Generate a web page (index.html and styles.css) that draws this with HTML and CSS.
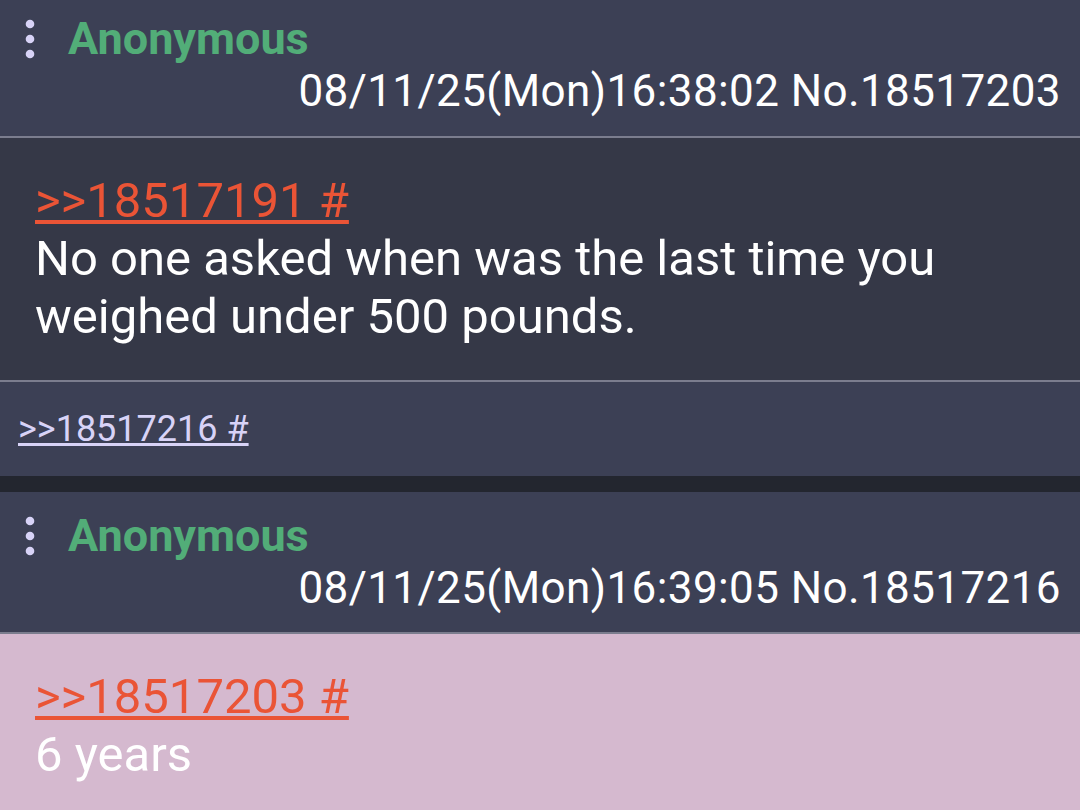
FILE: index.html
```html
<!DOCTYPE html>
<html lang="en">
  <head>
    <meta charset="UTF-8" />
    <title>Thread</title>
    <link rel="stylesheet" href="styles.css">
  </head>
  <body>
    <!-- first post is scrolled a few pixels past the top edge -->
    <div class="post scrolled">
      <div class="post-head">
        <div class="name-row">
          <svg class="menu" width="12" height="42" viewBox="0 0 12 42">
            <circle cx="6" cy="6" r="4.3" />
            <circle cx="6" cy="21" r="4.3" />
            <circle cx="6" cy="36" r="4.3" />
          </svg>
          <span class="name">Anonymous</span>
        </div>
        <div class="meta">08/11/25(Mon)16:38:02 No.18517203</div>
      </div>
      <div class="post-body">
        <a class="quote" href="#">&gt;&gt;18517191 #</a>
        <p>No one asked when was the last time you weighed under 500 pounds.</p>
      </div>
      <div class="replies">
        <a href="#">&gt;&gt;18517216 #</a>
      </div>
    </div>

    <div class="post">
      <div class="post-head">
        <div class="name-row">
          <svg class="menu" width="12" height="42" viewBox="0 0 12 42">
            <circle cx="6" cy="6" r="4.3" />
            <circle cx="6" cy="21" r="4.3" />
            <circle cx="6" cy="36" r="4.3" />
          </svg>
          <span class="name">Anonymous</span>
        </div>
        <div class="meta">08/11/25(Mon)16:39:05 No.18517216</div>
      </div>
      <div class="post-body highlight">
        <a class="quote" href="#">&gt;&gt;18517203 #</a>
        <p>6 years</p>
      </div>
    </div>
  </body>
</html>
```

FILE: styles.css
```css
*,
*::before,
*::after {
  box-sizing: border-box;
}

body {
  margin: 0;
  background-color: #23262f;
  font-family: Roboto, "Liberation Sans", sans-serif;
  color: #fff;
}

.post {
  display: flex;
  flex-direction: column;
  margin-bottom: 16px;
}

.post-head {
  background-color: #3c4055;
  height: 142px;
  padding: 20px 19px 0 24px;
  border-bottom: 2px solid #7b7d8e;
}

.scrolled .post-head {
  height: 138px;
  padding-top: 15px;
}

.name-row {
  display: flex;
  align-items: center;
  gap: 32px;
  height: 48px;
}

.menu {
  fill: #d8d3f7;
}

.name {
  color: #52ad78;
  font-weight: 700;
  font-size: 45px;
  line-height: 48px;
}

.meta {
  text-align: right;
  font-size: 44px;
  letter-spacing: 0.4px;
  line-height: 56px;
}

.post-body {
  background-color: #353847;
  padding: 34px 35px 34px;
  border-bottom: 2px solid #7b7d8e;
  font-size: 49px;
  line-height: 58px;
}

.post-body p {
  margin: 0;
}

.quote {
  display: block;
  color: #ea5436;
}

.highlight {
  background-color: #d5b9cf;
  border-bottom: none;
  height: 176px;
}

.replies {
  background-color: #3c4055;
  height: 94px;
  padding: 0 18px;
  display: flex;
  align-items: center;
  font-size: 36px;
}

.replies a {
  color: #d8d3f7;
}
```
